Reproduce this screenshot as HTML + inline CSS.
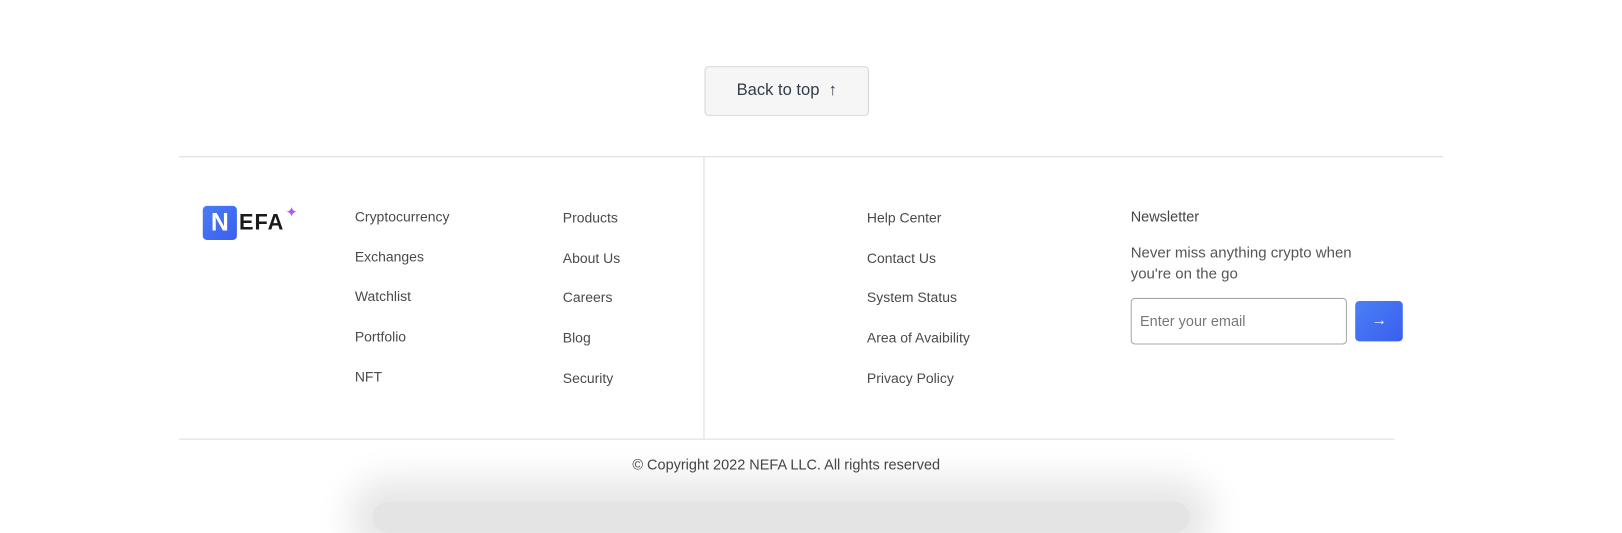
<!DOCTYPE html>
<html><head><style>
body{margin:0;width:1622px;height:491px;background:#fff;position:relative;overflow:hidden;font-family:"Liberation Sans",sans-serif;}
#w{position:absolute;left:0;top:0;width:1568px;height:475px;transform:scale(1.0345);transform-origin:0 0;}
.a{position:absolute;}
.l{color:#4a4a4a;font-size:13.5px;}
.btn{left:681px;top:64px;width:157px;height:46px;border:1px solid #d6d6d6;border-radius:4px;background:#f6f6f6;color:#333a48;font-size:16px;line-height:46px;text-align:center;}
</style></head><body><div id="w">
<div class="a btn">Back to top&nbsp;&nbsp;↑</div>
<div class="a" style="left:173px;top:151px;width:1222px;height:1px;background:#dcdcdc"></div>
<div class="a" style="left:680px;top:152px;width:1px;height:272px;background:#dcdcdc"></div>
<div class="a" style="left:173px;top:424px;width:1175px;height:1px;background:#dcdcdc"></div>
<div class="a" style="left:196px;top:199px;width:33px;height:33px;border-radius:4px;background:linear-gradient(135deg,#4a7cf5,#3a5ff0);color:#fff;font-weight:bold;font-size:24px;line-height:33px;text-align:center;">N</div>
<div class="a" style="left:231px;top:204px;font-weight:bold;font-size:21px;color:#1a1a1a;letter-spacing:1px">EFA</div>
<div class="a" style="left:276px;top:197px;color:#b25af0;font-size:14px">✦</div>
<div class="a l" style="left:343px;top:202px">Cryptocurrency</div>
<div class="a l" style="left:343px;top:241px">Exchanges</div>
<div class="a l" style="left:343px;top:279px">Watchlist</div>
<div class="a l" style="left:343px;top:318px">Portfolio</div>
<div class="a l" style="left:343px;top:357px">NFT</div>
<div class="a l" style="left:544px;top:203px">Products</div>
<div class="a l" style="left:544px;top:242px">About Us</div>
<div class="a l" style="left:544px;top:280px">Careers</div>
<div class="a l" style="left:544px;top:319px">Blog</div>
<div class="a l" style="left:544px;top:358px">Security</div>
<div class="a l" style="left:838px;top:203px">Help Center</div>
<div class="a l" style="left:838px;top:242px">Contact Us</div>
<div class="a l" style="left:838px;top:280px">System Status</div>
<div class="a l" style="left:838px;top:319px">Area of Avaibility</div>
<div class="a l" style="left:838px;top:358px">Privacy Policy</div>
<div class="a" style="left:1093px;top:201px;font-size:14px;color:#444">Newsletter</div>
<div class="a" style="left:1093px;top:235px;font-size:14.5px;color:#555;line-height:20px;width:240px">Never miss anything crypto when you're on the go</div>
<div class="a" style="left:1093px;top:288px;border:1px solid #a8a8a8;border-radius:4px;color:#777;font-size:14px;line-height:43px;padding-left:8px;box-sizing:border-box;width:209px;height:45px">Enter your email</div>
<div class="a" style="left:1310px;top:291px;width:46px;height:39px;border-radius:4px;background:linear-gradient(135deg,#4b80f5,#3a5ef0);color:#fff;text-align:center;line-height:38px;font-size:15px">→</div>
<div class="a" style="left:360px;top:485px;width:790px;height:30px;border-radius:30px;box-shadow:0 0 35px 22px rgba(0,0,0,0.10);background:#e4e4e4"></div>
<div class="a" style="left:0;width:1520px;top:441px;text-align:center;font-size:14px;color:#444">© Copyright 2022 NEFA LLC. All rights reserved</div>
</div></body></html>
